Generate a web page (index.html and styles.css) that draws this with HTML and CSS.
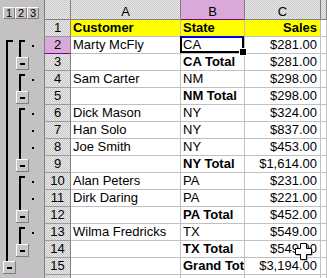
FILE: index.html
```html
<!DOCTYPE html>
<html lang="en">
<head>
  <meta charset="UTF-8" />
  <title>Outline Subtotals</title>
  <link rel="stylesheet" href="styles.css">
</head>
<body>

<div class="sheet">
  <!-- header row -->
  <div class="levels">
    <span class="lvl">1</span><span class="lvl">2</span><span class="lvl">3</span>
  </div>
  <div class="corner"></div>
  <div class="colhead">A</div>
  <div class="colhead active">B</div>
  <div class="colhead">C</div>
  <div class="colhead"></div>

  <!-- outline symbols -->
  <div class="outline">
    <svg width="44" height="272" viewBox="0 0 44 272">
      <defs>
        <symbol id="btn" viewBox="0 0 13 13">
          <rect width="13" height="13" fill="#808080"/>
          <rect width="12" height="12" fill="#fff"/>
          <rect x="1" y="1" width="11" height="11" fill="#c6c6c6"/>
          <rect x="4" y="6" width="5" height="2" fill="#000"/>
        </symbol>
      </defs>
      <!-- level 1 -->
      <rect x="6" y="20" width="2" height="221" fill="#000"/>
      <rect x="6" y="20" width="7" height="2" fill="#000"/>
      <use href="#btn" x="3" y="241" width="13" height="13"/>
      <!-- level 2 -->
      <rect x="19" y="20" width="2" height="17" fill="#000"/>
      <rect x="19" y="20" width="6" height="2" fill="#000"/>
      <use href="#btn" x="16" y="37" width="13" height="13"/>

      <rect x="19" y="54" width="2" height="17" fill="#000"/>
      <rect x="19" y="54" width="6" height="2" fill="#000"/>
      <use href="#btn" x="16" y="71" width="13" height="13"/>

      <rect x="19" y="88" width="2" height="51" fill="#000"/>
      <rect x="19" y="88" width="6" height="2" fill="#000"/>
      <use href="#btn" x="16" y="139" width="13" height="13"/>

      <rect x="19" y="156" width="2" height="34" fill="#000"/>
      <rect x="19" y="156" width="6" height="2" fill="#000"/>
      <use href="#btn" x="16" y="190" width="13" height="13"/>

      <rect x="19" y="207" width="2" height="17" fill="#000"/>
      <rect x="19" y="207" width="6" height="2" fill="#000"/>
      <use href="#btn" x="16" y="224" width="13" height="13"/>
      <!-- detail dots -->
      <g fill="#000">
        <rect x="32" y="25" width="2" height="2"/>
        <rect x="32" y="59" width="2" height="2"/>
        <rect x="32" y="93" width="2" height="2"/>
        <rect x="32" y="110" width="2" height="2"/>
        <rect x="32" y="127" width="2" height="2"/>
        <rect x="32" y="161" width="2" height="2"/>
        <rect x="32" y="178" width="2" height="2"/>
        <rect x="32" y="212" width="2" height="2"/>
      </g>
    </svg>
  </div>

  <div class="rh">1</div>
  <div class="c hl b">Customer</div>
  <div class="c hl b">State</div>
  <div class="c hl b num">Sales</div>
  <div class="c"></div>

  <div class="rh active">2</div>
  <div class="c">Marty McFly</div>
  <div class="c sel">CA</div>
  <div class="c num">$281.00</div>
  <div class="c"></div>

  <div class="rh">3</div>
  <div class="c"></div>
  <div class="c b">CA Total</div>
  <div class="c num">$281.00</div>
  <div class="c"></div>

  <div class="rh">4</div>
  <div class="c">Sam Carter</div>
  <div class="c">NM</div>
  <div class="c num">$298.00</div>
  <div class="c"></div>

  <div class="rh">5</div>
  <div class="c"></div>
  <div class="c b">NM Total</div>
  <div class="c num">$298.00</div>
  <div class="c"></div>

  <div class="rh">6</div>
  <div class="c">Dick Mason</div>
  <div class="c">NY</div>
  <div class="c num">$324.00</div>
  <div class="c"></div>

  <div class="rh">7</div>
  <div class="c">Han Solo</div>
  <div class="c">NY</div>
  <div class="c num">$837.00</div>
  <div class="c"></div>

  <div class="rh">8</div>
  <div class="c">Joe Smith</div>
  <div class="c">NY</div>
  <div class="c num">$453.00</div>
  <div class="c"></div>

  <div class="rh">9</div>
  <div class="c"></div>
  <div class="c b">NY Total</div>
  <div class="c num">$1,614.00</div>
  <div class="c"></div>

  <div class="rh">10</div>
  <div class="c">Alan Peters</div>
  <div class="c">PA</div>
  <div class="c num">$231.00</div>
  <div class="c"></div>

  <div class="rh">11</div>
  <div class="c">Dirk Daring</div>
  <div class="c">PA</div>
  <div class="c num">$221.00</div>
  <div class="c"></div>

  <div class="rh">12</div>
  <div class="c"></div>
  <div class="c b">PA Total</div>
  <div class="c num">$452.00</div>
  <div class="c"></div>

  <div class="rh">13</div>
  <div class="c">Wilma Fredricks</div>
  <div class="c">TX</div>
  <div class="c num">$549.00</div>
  <div class="c"></div>

  <div class="rh">14</div>
  <div class="c"></div>
  <div class="c b">TX Total</div>
  <div class="c num">$549.00</div>
  <div class="c"></div>

  <div class="rh">15</div>
  <div class="c"></div>
  <div class="c b">Grand Total</div>
  <div class="c num">$3,194.00</div>
  <div class="c"></div>

  <!-- top edge of row 16 -->
  <div class="rh"></div>
  <div class="c"></div>
  <div class="c"></div>
  <div class="c"></div>
  <div class="c"></div>

  <!-- mouse pointer over C14 -->
  <svg class="cursor" width="18" height="18" viewBox="0 0 18 18">
    <path d="M6.5 1.5h6v5h5v6h-5v5h-6v-5h-5v-6h5z" fill="#808080"/>
    <path d="M5.5 0.5h6v5h5v6h-5v5h-6v-5h-5v-6h5z" fill="#fff" stroke="#000"/>
  </svg>
</div>

</body>
</html>
```

FILE: styles.css
```css
* {
  box-sizing: border-box;
}

body {
  margin: 0;
  background: #fff;
  color: #000;
  font-family: "Liberation Sans", Arial, sans-serif;
  font-size: 13px;
}

.sheet {
  position: relative;
  display: grid;
  grid-template-columns: 44px 27px 110px 64px 76px 6px;
  grid-template-rows: 20px repeat(16, 17px);
  width: 327px;
  height: 278px;
  overflow: hidden;
}

/* dithered grey used by the headers */
.corner, .colhead, .rh {
  background-color: #d6d6d6;
  background-image: conic-gradient(#c6c6c6 25%, #ebebeb 0 50%, #c6c6c6 0 75%, #ebebeb 0);
  background-size: 2px 2px;
}

.levels {
  display: flex;
  padding: 7px 0 0 3px;
  background: #c3c1c3;
}

.lvl {
  width: 12px;
  height: 12px;
  border: 1px solid;
  border-color: #fff #808080 #808080 #fff;
  font-size: 11px;
  line-height: 10px;
  text-align: center;
}

.corner {
  border-left: 1px solid #808080;
  border-right: 1px solid #808080;
  border-bottom: 1px solid #808080;
}

.colhead {
  border-right: 1px solid #808080;
  border-bottom: 1px solid #808080;
  padding-top: 5px;
  line-height: 14px;
  text-align: center;
}

.colhead.active {
  background: #d9a9d9;
  border-bottom-color: #800080;
}

.outline {
  grid-column: 1;
  grid-row: 2 / span 16;
  background: #c3c1c3;
}

.outline svg {
  display: block;
}

.rh {
  border-left: 1px solid #808080;
  border-right: 1px solid #808080;
  border-bottom: 1px solid #9a9a9a;
  line-height: 16px;
  text-align: center;
}

.rh.active {
  background: #d9a9d9;
  border-bottom-color: #800080;
}

.c {
  border-right: 1px solid #c0c0c0;
  border-bottom: 1px solid #c0c0c0;
  padding: 0 3px 0 2px;
  line-height: 16px;
  white-space: nowrap;
  overflow: hidden;
}

.num {
  text-align: right;
}

.b {
  font-weight: bold;
}

.hl {
  background: #ffff00;
}

/* active cell frame and fill handle */
.sel {
  position: relative;
  overflow: visible;
}

.sel::before {
  content: "";
  position: absolute;
  left: -1px;
  top: -1px;
  right: 0;
  bottom: 0;
  border: 2px solid #000;
  border-top-color: #0000ff;
}

.sel::after {
  content: "";
  position: absolute;
  right: -3px;
  bottom: -3px;
  width: 6px;
  height: 6px;
  background: #000;
  border: 1px solid #fff;
  z-index: 1;
}

.cursor {
  position: absolute;
  left: 295px;
  top: 243px;
}
```
